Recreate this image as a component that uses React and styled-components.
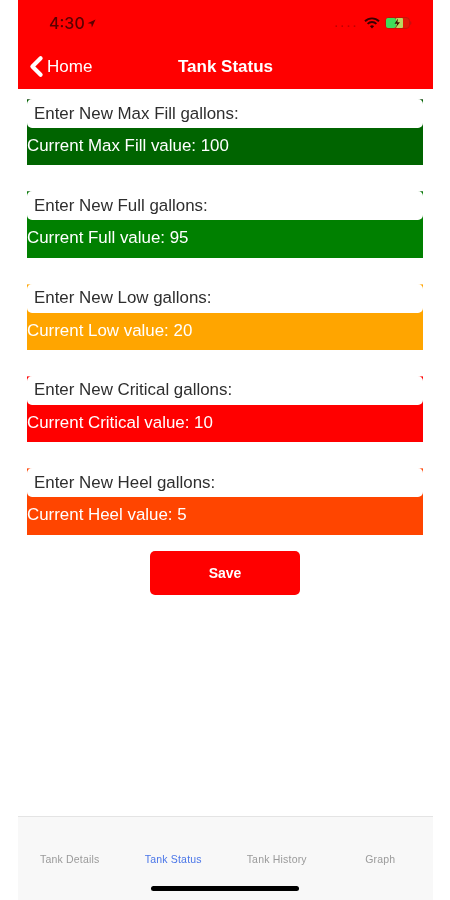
import styled, { createGlobalStyle } from "styled-components";
import { ChevronLeft } from "lucide-react";

const levels = [
  { name: "Max Fill", value: 100, color: "#006400", edge: "#4d7a4d" },
  { name: "Full", value: 95, color: "#008000", edge: "#4d8f4d" },
  { name: "Low", value: 20, color: "#ffa500", edge: "#ffc766" },
  { name: "Critical", value: 10, color: "#ff0000", edge: "#ff6666" },
  { name: "Heel", value: 5, color: "#ff4500", edge: "#ff8a66" },
];

const tabs = ["Tank Details", "Tank Status", "Tank History", "Graph"];

export default function App() {
  return (
    <>
      <GlobalStyle />
      <Screen>
        <Header>
          <StatusBar>
            <Clock>
              4:30
              <svg width="9" height="9" viewBox="0 0 10 10">
                <path d="M9.5 0.5 L0.5 4.6 L4.8 5.2 L5.4 9.5 Z" fill="#5a0000" />
              </svg>
            </Clock>
            <StatusIcons>
              <Dots>....</Dots>
              <svg width="16" height="12" viewBox="0 0 16 12">
                <path d="M1 4.2a10 10 0 0 1 14 0" fill="none" stroke="#3a0000" strokeWidth="1.9" />
                <path d="M3.6 6.9a6.2 6.2 0 0 1 8.8 0" fill="none" stroke="#3a0000" strokeWidth="1.9" />
                <path d="M5.9 9.2a3 3 0 0 1 4.2 0L8 11.6z" fill="#3a0000" />
              </svg>
              <svg width="27" height="12" viewBox="0 0 27 12">
                <rect x="0.5" y="0.5" width="24" height="11" rx="3.5" fill="#e01808" stroke="#c81008" />
                <rect x="1" y="1" width="10" height="10" rx="2" fill="#3fdc5a" />
                <rect x="11" y="1" width="7" height="10" rx="1" fill="#b8d860" />
                <path d="M13 1.5L9.5 6.8h2.6L10.8 10.5 15 5.2h-2.6z" fill="#3a1000" />
                <path d="M25.2 4v4a2 2 0 0 0 1.2-2 2 2 0 0 0-1.2-2z" fill="#c01010" />
              </svg>
            </StatusIcons>
          </StatusBar>
          <NavBar>
            <BackLink>
              <ChevronLeft size={33} strokeWidth={3} />
              Home
            </BackLink>
            <NavTitle>Tank Status</NavTitle>
          </NavBar>
        </Header>

        <Content>
          {levels.map((level) => (
            <LevelBlock key={level.name} $color={level.color} $edge={level.edge}>
              <GallonInput placeholder={`Enter New ${level.name} gallons:`} />
              <CurrentValue>
                Current {level.name} value: {level.value}
              </CurrentValue>
            </LevelBlock>
          ))}
          <SaveButton>Save</SaveButton>
        </Content>

        <TabBar>
          <TabRow>
            {tabs.map((tab) => (
              <TabItem key={tab} $active={tab === "Tank Status"}>
                {tab}
              </TabItem>
            ))}
          </TabRow>
          <HomeIndicator />
        </TabBar>
      </Screen>
    </>
  );
}

const GlobalStyle = createGlobalStyle`
  body {
    margin: 0;
    background: #ffffff;
    font-family: "Liberation Sans", Arial, sans-serif;
  }
`;

const Screen = styled.div`
  width: 415px;
  height: 900px;
  margin-left: 18px;
  display: flex;
  flex-direction: column;
  background: #ffffff;
  filter: blur(0.45px);
`;

const Header = styled.header`
  height: 89px;
  flex-shrink: 0;
  background: #ff0000;
  display: flex;
  flex-direction: column;
`;

const StatusBar = styled.div`
  height: 46px;
  padding: 0 21px 0 31px;
  box-sizing: border-box;
  display: flex;
  align-items: center;
  justify-content: space-between;
`;

const Clock = styled.div`
  display: flex;
  align-items: center;
  gap: 2px;
  font-family: Inter, sans-serif;
  font-size: 16px;
  font-weight: 500;
  color: #5a0000;
`;

const StatusIcons = styled.div`
  display: flex;
  align-items: center;
  gap: 5px;
`;

const Dots = styled.span`
  font-size: 11px;
  font-weight: 700;
  letter-spacing: 3px;
  color: #c00000;
  line-height: 8px;
`;

const NavBar = styled.nav`
  position: relative;
  height: 43px;
  display: flex;
  align-items: center;
  justify-content: center;
  padding-bottom: 2px;
  box-sizing: border-box;
`;

const BackLink = styled.div`
  position: absolute;
  left: 2px;
  top: 4px;
  display: flex;
  align-items: center;
  font-size: 17px;
  color: #ffffff;
  svg {
    margin-right: -6px;
  }
`;

const NavTitle = styled.h1`
  margin: 0;
  font-size: 17px;
  font-weight: 700;
  color: #ffffff;
`;

const Content = styled.main`
  flex: 1;
  padding: 10px 10px 0 9px;
  display: flex;
  flex-direction: column;
  gap: 25.9px;
`;

const LevelBlock = styled.section`
  height: 66.4px;
  display: flex;
  flex-direction: column;
  background: ${(p) => p.$color};
  box-shadow: inset 0 1px 0 ${(p) => p.$edge};
`;

const GallonInput = styled.input`
  height: 29px;
  width: 100%;
  box-sizing: border-box;
  flex-shrink: 0;
  border: 0;
  border-radius: 5px;
  padding: 0 7px;
  background: #ffffff;
  font-family: "Liberation Sans", Arial, sans-serif;
  font-size: 16.9px;
  outline: none;
  &::placeholder {
    color: #2e2e2e;
    opacity: 1;
  }
`;

const CurrentValue = styled.div`
  flex: 1;
  display: flex;
  align-items: center;
  padding-bottom: 1px;
  font-size: 16.9px;
  color: #ffffff;
`;

const SaveButton = styled.button`
  align-self: center;
  width: 150px;
  height: 44px;
  margin-top: -9.5px;
  border: 0;
  border-radius: 5px;
  background: #ff0000;
  color: #ffffff;
  font-family: "Liberation Sans", Arial, sans-serif;
  font-size: 14px;
  font-weight: 700;
`;

const TabBar = styled.footer`
  height: 84px;
  flex-shrink: 0;
  box-sizing: border-box;
  border-top: 1px solid #e4e4e4;
  background: #f8f8f8;
  display: flex;
  flex-direction: column;
  align-items: center;
`;

const TabRow = styled.div`
  width: 100%;
  height: 69px;
  flex-shrink: 0;
  display: grid;
  grid-template-columns: repeat(4, 1fr);
  padding: 36px 1px 0 0;
  box-sizing: border-box;
`;

const TabItem = styled.div`
  text-align: center;
  font-size: 10.5px;
  letter-spacing: 0.2px;
  color: ${(p) => (p.$active ? "#4a76e8" : "#9a9a9a")};
`;

const HomeIndicator = styled.div`
  width: 148px;
  height: 5px;
  margin-right: 1px;
  border-radius: 2.5px;
  background: #000000;
`;
